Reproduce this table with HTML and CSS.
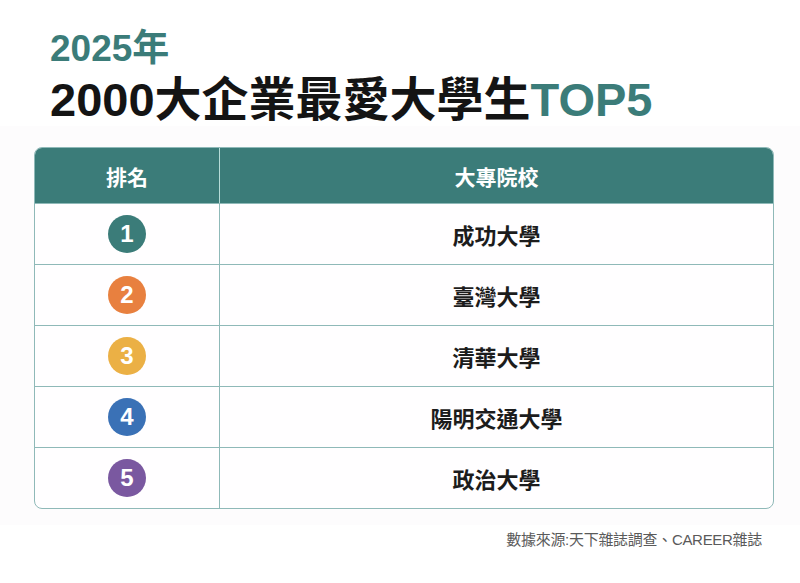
FILE: index.html
```html
<!DOCTYPE html>
<html lang="zh-Hant">
<head>
<meta charset="utf-8">
<title>2025年 2000大企業最愛大學生TOP5</title>
<link rel="stylesheet" href="styles.css">
</head>
<body>
<header class="head">
  <div class="year">2025年</div>
  <h1 class="title">2000大企業最愛大學生<span class="accent">TOP5</span></h1>
</header>
<section class="panel">
  <div class="table">
    <div class="row row-head">
      <div class="cell cell-rank">排名</div>
      <div class="cell cell-school">大專院校</div>
    </div>
    <div class="row">
      <div class="cell cell-rank"><span class="badge b1">1</span></div>
      <div class="cell cell-school">成功大學</div>
    </div>
    <div class="row">
      <div class="cell cell-rank"><span class="badge b2">2</span></div>
      <div class="cell cell-school">臺灣大學</div>
    </div>
    <div class="row">
      <div class="cell cell-rank"><span class="badge b3">3</span></div>
      <div class="cell cell-school">清華大學</div>
    </div>
    <div class="row">
      <div class="cell cell-rank"><span class="badge b4">4</span></div>
      <div class="cell cell-school">陽明交通大學</div>
    </div>
    <div class="row">
      <div class="cell cell-rank"><span class="badge b5">5</span></div>
      <div class="cell cell-school">政治大學</div>
    </div>
  </div>
</section>
<footer class="source">數據來源:天下雜誌調查、CAREER雜誌</footer>
</body>
</html>
```
FILE: styles.css
```css
html, body {
  margin: 0;
  padding: 0;
  background: #ffffff;
}
body {
  width: 800px;
  height: 583px;
  overflow: hidden;
  font-family: "Liberation Sans", "Noto Sans CJK TC", sans-serif;
  color: #1a1a1a;
}
.head {
  padding: 28px 0 0 50px;
}
.year {
  font-size: 37px;
  line-height: 42px;
  font-weight: 700;
  color: #3b7c79;
}
.title {
  margin: 4px 0 0 0;
  font-size: 47px;
  line-height: 52px;
  font-weight: 700;
  color: #141414;
}
.accent {
  color: #3b7c79;
}
.panel {
  margin-top: 0;
  padding: 21px 26px 16px 34px;
  background: #fdfcfd;
}
.table {
  border: 1px solid #8fb9b8;
  border-radius: 8px;
  overflow: hidden;
  background: #fffeff;
}
.row {
  display: grid;
  grid-template-columns: 185px 1fr;
  height: 60px;
  border-top: 1px solid #8fb9b8;
}
.row-head {
  height: 55px;
  border-top: none;
  background: #3b7c79;
  color: #ffffff;
}
.cell {
  display: flex;
  align-items: center;
  justify-content: center;
  font-family: "Noto Sans CJK TC", sans-serif;
  font-weight: 700;
  font-size: 22px;
}
.cell-rank {
  border-right: 1px solid #8fb9b8;
}
.row-head .cell-rank {
  border-right-color: #b7dcd8;
}
.row-head .cell {
  font-size: 21px;
}
.cell-school {
  color: #1c1c1c;
}
.row-head .cell-school {
  color: #ffffff;
}
.badge {
  width: 38px;
  height: 38px;
  border-radius: 50%;
  display: flex;
  align-items: center;
  justify-content: center;
  color: #ffffff;
  font-family: "Liberation Sans", sans-serif;
  font-weight: 700;
  font-size: 24px;
}
.b1 { background: #3b7c79; }
.b2 { background: #e8803f; }
.b3 { background: #ebb045; }
.b4 { background: #3a71b6; }
.b5 { background: #7a58a0; }
.source {
  margin-top: 6px;
  padding-right: 38px;
  text-align: right;
  font-family: "Liberation Sans", "Noto Sans CJK TC", sans-serif;
  font-size: 15px;
  line-height: 18px;
  color: #5a5a5a;
  letter-spacing: -0.3px;
}
```
